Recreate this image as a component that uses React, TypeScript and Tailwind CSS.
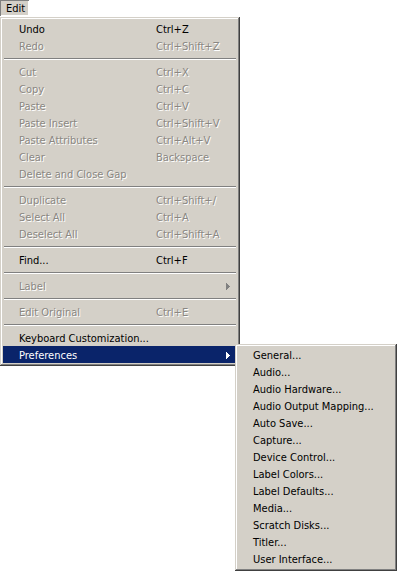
import type { FC } from "react";

interface IMenuItem {
  label: string;
  shortcut?: string;
  disabled?: boolean;
  submenu?: boolean;
  active?: boolean;
}

type MenuEntry = IMenuItem | "sep";

const editMenu: MenuEntry[] = [
  { label: "Undo", shortcut: "Ctrl+Z" },
  { label: "Redo", shortcut: "Ctrl+Shift+Z", disabled: true },
  "sep",
  { label: "Cut", shortcut: "Ctrl+X", disabled: true },
  { label: "Copy", shortcut: "Ctrl+C", disabled: true },
  { label: "Paste", shortcut: "Ctrl+V", disabled: true },
  { label: "Paste Insert", shortcut: "Ctrl+Shift+V", disabled: true },
  { label: "Paste Attributes", shortcut: "Ctrl+Alt+V", disabled: true },
  { label: "Clear", shortcut: "Backspace", disabled: true },
  { label: "Delete and Close Gap", disabled: true },
  "sep",
  { label: "Duplicate", shortcut: "Ctrl+Shift+/", disabled: true },
  { label: "Select All", shortcut: "Ctrl+A", disabled: true },
  { label: "Deselect All", shortcut: "Ctrl+Shift+A", disabled: true },
  "sep",
  { label: "Find...", shortcut: "Ctrl+F" },
  "sep",
  { label: "Label", disabled: true, submenu: true },
  "sep",
  { label: "Edit Original", shortcut: "Ctrl+E", disabled: true },
  "sep",
  { label: "Keyboard Customization..." },
  { label: "Preferences", submenu: true, active: true },
];

const preferences = [
  "General...",
  "Audio...",
  "Audio Hardware...",
  "Audio Output Mapping...",
  "Auto Save...",
  "Capture...",
  "Device Control...",
  "Label Colors...",
  "Label Defaults...",
  "Media...",
  "Scratch Disks...",
  "Titler...",
  "User Interface...",
];

const bevel =
  "bg-[#d4d0c8] shadow-[inset_-1px_-1px_0_#404040,inset_1px_1px_0_#d4d0c8,inset_-2px_-2px_0_#808080,inset_2px_2px_0_#ffffff]";

const Arrow: FC<{ color: string }> = ({ color }) => (
  <svg width="4" height="7" viewBox="0 0 4 7" className="shrink-0">
    <path d="M0 0h1v7H0zM1 1h1v5H1zM2 2h1v3H2zM3 3h1v1H3z" fill={color} />
  </svg>
);

const Separator = () => (
  <div className="h-[9px] flex flex-col justify-center px-px">
    <div className="h-px bg-[#808080]" />
    <div className="h-px bg-white" />
  </div>
);

const Row: FC<{ item: IMenuItem }> = ({ item }) => {
  const tone = item.active
    ? "bg-[#0a246a] text-white"
    : item.disabled
      ? "text-[#8a8782] [text-shadow:1px_1px_0_#ffffff]"
      : "text-black";

  return (
    <div className={`h-[17px] flex items-center pl-[16px] pr-[7px] pt-px ${tone}`}>
      <span className="w-[137px] whitespace-nowrap">{item.label}</span>
      <span className="flex-1 whitespace-nowrap">{item.shortcut}</span>
      {item.submenu && <Arrow color={item.active ? "#ffffff" : "#808080"} />}
    </div>
  );
};

export default function App() {
  return (
    <div className="relative w-[397px] h-[571px] bg-white text-[11px] leading-none font-['DejaVu_Sans_Condensed','Liberation_Sans',sans-serif]">
      <div className="w-[29px] h-[16px] bg-[#d4d0c8] flex items-center pl-[6px] pt-px text-black shadow-[inset_1px_1px_0_#808080,inset_-1px_-1px_0_#ffffff]">
        Edit
      </div>
      <div className="h-px" />
      <div className={`w-[240px] p-[3px] ${bevel}`}>
        {editMenu.map((entry, i) =>
          entry === "sep" ? <Separator key={i} /> : <Row key={i} item={entry} />
        )}
      </div>

      <div className={`absolute left-[235px] top-[344px] w-[162px] p-[3px] ${bevel}`}>
        {preferences.map((p) => (
          <div key={p} className="h-[17px] flex items-center pl-[15px] text-black whitespace-nowrap">
            {p}
          </div>
        ))}
      </div>
    </div>
  );
}
